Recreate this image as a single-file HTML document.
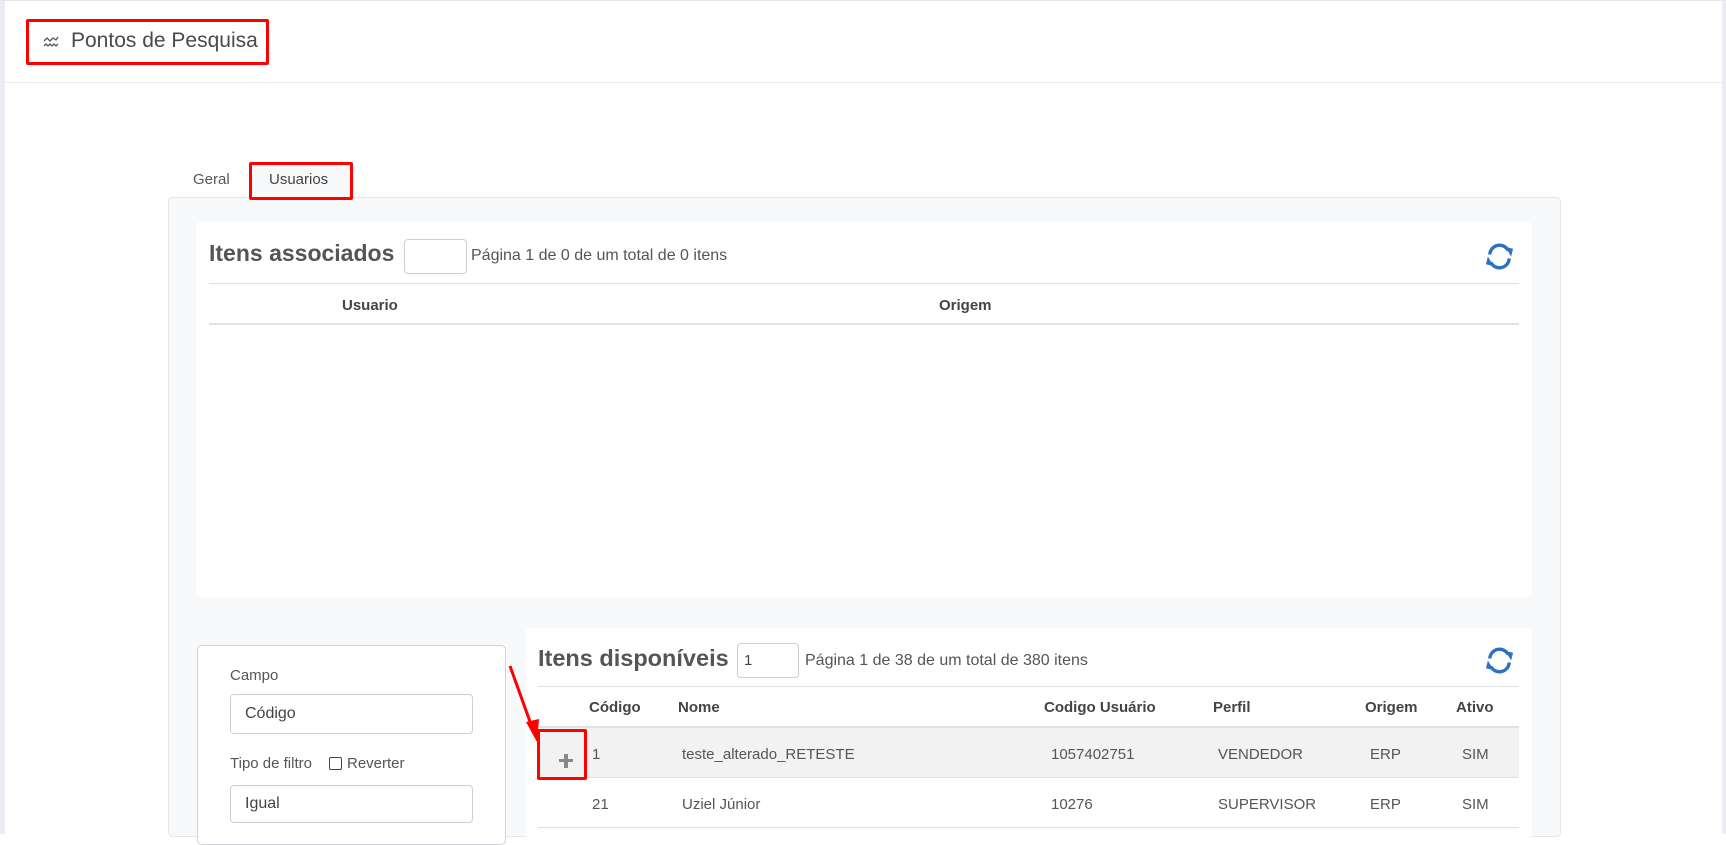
<!DOCTYPE html>
<html><head><meta charset="utf-8"><style>
*{box-sizing:border-box;margin:0;padding:0}
body{width:1726px;height:834px;overflow:hidden;background:#fff;font-family:"Liberation Sans",sans-serif;color:#555;position:relative}
.a{position:absolute;white-space:nowrap}
.red{position:absolute;border:3px solid #f00;border-radius:2px}
.inp{position:absolute;border:1px solid #ccd0d5;border-radius:4px;background:#fff}
.line{position:absolute;background:#dee2e6}
.th{position:absolute;font-weight:bold;font-size:15px;color:#444;white-space:nowrap}
.td{position:absolute;font-size:15px;color:#555;white-space:nowrap}
</style></head><body>
<div class="a" style="left:0;top:0;width:5px;height:834px;background:#ebedf2"></div>
<div class="a" style="left:1722px;top:0;width:4px;height:834px;background:#ebedf2"></div>
<div class="a" style="left:0;top:0;width:1726px;height:1px;background:#e5e7eb"></div>
<div class="a" style="left:5px;top:82px;width:1717px;height:1px;background:#e9ebef"></div>

<div class="red" style="left:26px;top:19px;width:243px;height:46px"></div>
<svg class="a" style="left:43px;top:34px" width="16" height="15" viewBox="0 0 16 15" fill="none" stroke="#555" stroke-width="1.3"><path d="M1 7l3-3 3 3 3-3 3 2 2-3"/><path d="M1 12l2-2 2 2 2-2 2 2 2-2 2 2 2-2"/></svg>
<div class="a" style="left:71px;top:29px;font-size:21px;color:#4a4a4a">Pontos de Pesquisa</div>

<div class="a" style="left:168px;top:197px;width:1393px;height:640px;background:#f8f9fb;border:1px solid #e5e7eb;border-radius:4px"></div>
<div class="a" style="left:250px;top:162px;width:102px;height:37px;background:#f8f9fb;border:1px solid #e5e7eb;border-bottom:none;border-radius:4px 4px 0 0"></div>
<div class="a" style="left:193px;top:171px;font-size:15px;color:#555">Geral</div>
<div class="a" style="left:269px;top:171px;font-size:15px;color:#444">Usuarios</div>
<div class="red" style="left:249px;top:162px;width:104px;height:38px"></div>

<div class="a" style="left:196px;top:222px;width:1336px;height:375px;background:#fff;border-radius:4px"></div>
<div class="a" style="left:209px;top:240px;font-size:23px;font-weight:bold;color:#555">Itens associados</div>
<div class="inp" style="left:404px;top:239px;width:63px;height:35px"></div>
<div class="a" style="left:471px;top:247px;font-size:16px;color:#555">Página 1 de 0 de um total de 0 itens</div>
<svg class="a" style="left:1484px;top:241px" width="31" height="31" viewBox="0 0 32 32"><g fill="none" stroke="#2d72c2" stroke-width="3.5"><path d="M6 14a10 10 0 0 1 19-4"/><path d="M26 18a10 10 0 0 1-19 4"/></g><path d="M22 6l8 2-2 8z" fill="#2d72c2"/><path d="M10 26l-8-2 2-8z" fill="#2d72c2"/></svg>
<div class="line" style="left:209px;top:283px;width:1310px;height:1px"></div>
<div class="th" style="left:342px;top:297px">Usuario</div>
<div class="th" style="left:939px;top:297px">Origem</div>
<div class="line" style="left:209px;top:323px;width:1310px;height:2px"></div>

<div class="a" style="left:197px;top:645px;width:309px;height:200px;background:#fff;border:1px solid #d0d3d8;border-radius:5px"></div>
<div class="a" style="left:230px;top:667px;font-size:15px;color:#555">Campo</div>
<div class="inp" style="left:230px;top:694px;width:243px;height:40px"></div>
<div class="a" style="left:245px;top:705px;font-size:16px;color:#444">Código</div>
<div class="a" style="left:230px;top:755px;font-size:15px;color:#555">Tipo de filtro</div>
<div class="a" style="left:329px;top:757px;width:13px;height:13px;border:1.5px solid #444;border-radius:2px"></div>
<div class="a" style="left:347px;top:755px;font-size:15px;color:#555">Reverter</div>
<div class="inp" style="left:230px;top:785px;width:243px;height:38px"></div>
<div class="a" style="left:245px;top:795px;font-size:16px;color:#444">Igual</div>

<div class="a" style="left:526px;top:628px;width:1006px;height:210px;background:#fff;border-radius:4px"></div>
<div class="a" style="left:538px;top:645px;font-size:23.5px;font-weight:bold;color:#555">Itens disponíveis</div>
<div class="inp" style="left:737px;top:643px;width:62px;height:35px"></div>
<div class="a" style="left:744px;top:652px;font-size:15px;color:#444">1</div>
<div class="a" style="left:805px;top:652px;font-size:16px;color:#555">Página 1 de 38 de um total de 380 itens</div>
<svg class="a" style="left:1484px;top:645px" width="31" height="31" viewBox="0 0 32 32"><g fill="none" stroke="#2d72c2" stroke-width="3.5"><path d="M6 14a10 10 0 0 1 19-4"/><path d="M26 18a10 10 0 0 1-19 4"/></g><path d="M22 6l8 2-2 8z" fill="#2d72c2"/><path d="M10 26l-8-2 2-8z" fill="#2d72c2"/></svg>
<div class="line" style="left:538px;top:686px;width:981px;height:1px"></div>
<div class="th" style="left:589px;top:699px">Código</div>
<div class="th" style="left:678px;top:699px">Nome</div>
<div class="th" style="left:1044px;top:699px">Codigo Usuário</div>
<div class="th" style="left:1213px;top:699px">Perfil</div>
<div class="th" style="left:1365px;top:699px">Origem</div>
<div class="th" style="left:1456px;top:699px">Ativo</div>
<div class="line" style="left:538px;top:726px;width:981px;height:2px"></div>
<div class="a" style="left:538px;top:728px;width:981px;height:49px;background:#f2f2f2"></div>
<div class="line" style="left:538px;top:777px;width:981px;height:1px"></div>
<div class="td" style="left:592px;top:746px">1</div>
<div class="td" style="left:682px;top:746px">teste_alterado_RETESTE</div>
<div class="td" style="left:1051px;top:746px">1057402751</div>
<div class="td" style="left:1218px;top:746px">VENDEDOR</div>
<div class="td" style="left:1370px;top:746px">ERP</div>
<div class="td" style="left:1462px;top:746px">SIM</div>
<div class="a" style="left:559px;top:759px;width:14px;height:3px;background:#888"></div>
<div class="a" style="left:564px;top:754px;width:4px;height:14px;background:#888"></div>
<div class="red" style="left:537px;top:729px;width:50px;height:51px"></div>
<div class="td" style="left:592px;top:796px">21</div>
<div class="td" style="left:682px;top:796px">Uziel Júnior</div>
<div class="td" style="left:1051px;top:796px">10276</div>
<div class="td" style="left:1218px;top:796px">SUPERVISOR</div>
<div class="td" style="left:1370px;top:796px">ERP</div>
<div class="td" style="left:1462px;top:796px">SIM</div>
<div class="line" style="left:538px;top:827px;width:981px;height:1px"></div>

<svg class="a" style="left:500px;top:660px" width="50" height="90"><path d="M10 6L33 70" stroke="#f00" stroke-width="3"/><path d="M26 62l11 20 2-23z" fill="#f00"/></svg>
</body></html>
